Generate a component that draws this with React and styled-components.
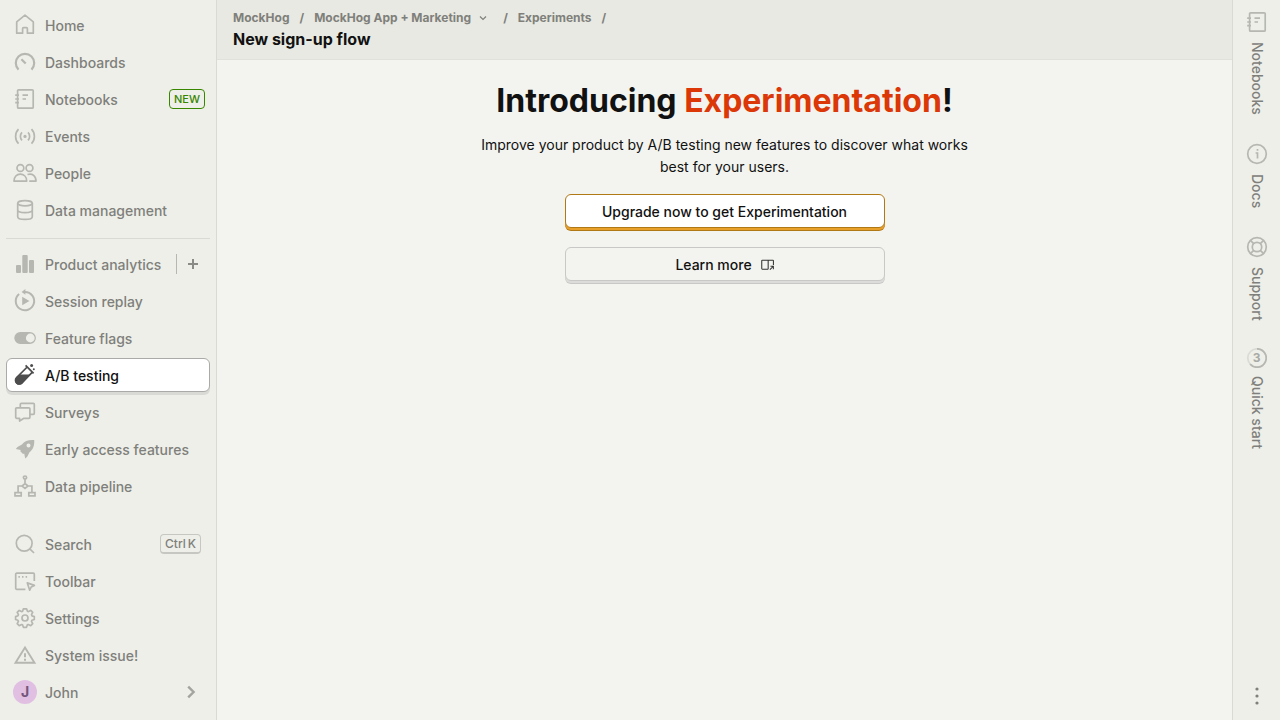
import React from "react";
import styled, { createGlobalStyle } from "styled-components";

const GlobalStyle = createGlobalStyle`
  *, *::before, *::after { box-sizing: border-box; }
  body {
    margin: 0;
    background: #f3f4ef;
    color: #111;
    font-family: Inter, "Liberation Sans", sans-serif;
    font-size: 14px;
    line-height: 20px;
  }
  button { font: inherit; color: inherit; cursor: pointer; }
  a { color: inherit; text-decoration: none; }
`;

const Layout = styled.div`
  display: flex;
  min-height: 100vh;
`;

const Sidebar = styled.nav`
  display: flex;
  flex-direction: column;
  justify-content: space-between;
  flex: 0 0 217px;
  padding: 8px 6px;
  background: #eeefe9;
  border-right: 1px solid #d9dad4;
`;

const NavList = styled.ul`
  list-style: none;
  margin: 0;
  padding: 0;

  & + & {
    margin-top: 8px;
    padding-top: 8px;
    border-top: 1px solid #d9dad4;
  }
`;

const NavItem = styled.li`
  display: flex;
  align-items: flex-start;
  height: 37px;
`;

const NavLink = styled.a`
  display: flex;
  flex: 1;
  align-items: center;
  gap: 8px;
  height: 34px;
  padding: 0 4px 0 6px;
  border: 1px solid ${(p) => (p.$active ? "#aaaaa8" : "transparent")};
  border-radius: 6px;
  background: ${(p) => (p.$active ? "#fff" : "transparent")};
  box-shadow: ${(p) => (p.$active ? "0 3px 0 #d9d9d6" : "none")};
  color: ${(p) => (p.$active ? "#111" : "#7f807b")};
  font-weight: 500;
  white-space: nowrap;
`;

const NavLabel = styled.span`
  flex: 1;
  padding-top: 1px;
`;

const Svg = styled.svg`
  display: block;
  flex: none;
  width: ${(p) => p.$size || 24}px;
  height: ${(p) => p.$size || 24}px;
  color: ${(p) => p.$color || "#b6b7b1"};
  fill: none;
  stroke: currentColor;
  stroke-width: 1.7;
`;

const NewTag = styled.span`
  padding: 0 4px;
  border: 1px solid #388600;
  border-radius: 4px;
  color: #388600;
  font-size: 11px;
  line-height: 18px;
`;

const Kbd = styled.kbd`
  display: flex;
  gap: 2px;
  margin-right: 4px;
  padding: 0 4px;
  border: 1px solid #c6c7c2;
  border-bottom-width: 2px;
  border-radius: 4px;
  font-family: inherit;
  font-size: 12px;
  line-height: 17px;
`;

const AddButton = styled.button`
  display: flex;
  align-items: center;
  justify-content: center;
  width: 34px;
  height: 20px;
  margin-top: 7px;
  padding: 0;
  border: 0;
  border-left: 1px solid #b6b7b1;
  background: none;
`;

const Avatar = styled.span`
  display: flex;
  align-items: center;
  justify-content: center;
  width: 24px;
  height: 24px;
  border-radius: 50%;
  background: #e0bfe3;
  color: #74567a;
  font-weight: 700;
`;

const Center = styled.div`
  display: flex;
  flex: 1;
  flex-direction: column;
  min-width: 0;
`;

const Header = styled.header`
  height: 60px;
  padding: 8px 16px;
  background: #e8e9e2;
  border-bottom: 1px solid #e0e1db;
`;

const Crumbs = styled.nav`
  display: flex;
  align-items: center;
  gap: 10px;
  color: #7f807b;
  font-size: 12px;
  font-weight: 700;
  line-height: 20px;
`;

const CrumbButton = styled.button`
  display: flex;
  align-items: center;
  gap: 6px;
  padding: 0 4px 0 0;
  border: 0;
  background: none;
`;

const Title = styled.h1`
  margin: 0;
  font-size: 16px;
  line-height: 22px;
  font-weight: 700;
`;

const Main = styled.main`
  display: flex;
  flex-direction: column;
  align-items: center;
  padding: 20px 16px;
`;

const Headline = styled.h2`
  margin: 0 0 12px;
  font-size: 32px;
  line-height: 42px;
  font-weight: 700;
  text-align: center;
`;

const Accent = styled.span`
  color: #db3707;
`;

const Lead = styled.p`
  max-width: 512px;
  margin: 0 0 16px;
  line-height: 22px;
  text-align: center;
`;

const Actions = styled.div`
  display: flex;
  flex-direction: column;
  gap: 19px;
  width: 100%;
  max-width: 320px;
`;

const ActionButton = styled.button`
  display: flex;
  align-items: center;
  justify-content: center;
  gap: 8px;
  height: 34px;
  padding: 1px 0 0;
  border: 1px solid ${(p) => (p.$primary ? "#b17816" : "#c8c9c6")};
  border-radius: 6px;
  background: ${(p) => (p.$primary ? "#fff" : "#f3f4ef")};
  box-shadow: ${(p) =>
    p.$primary ? "0 2px 0 #e9a02a, 0 3px 0 #b17816" : "0 2px 0 #dcddda, 0 3px 0 #c8c9c6"};
  font-weight: 500;
`;

const SidePanel = styled.aside`
  display: flex;
  flex-direction: column;
  justify-content: space-between;
  align-items: center;
  flex: 0 0 48px;
  padding: 10px 0 12px;
  background: #eeefe9;
  border-left: 1px solid #d9dad4;
`;

const PanelTabs = styled.div`
  display: flex;
  flex-direction: column;
  gap: 27px;
`;

const PanelTab = styled.button`
  display: flex;
  flex-direction: column;
  align-items: center;
  gap: 8px;
  padding: 0;
  border: 0;
  background: none;
  color: #7f807b;
  font-weight: 500;
`;

const PanelLabel = styled.span`
  writing-mode: vertical-rl;
  white-space: nowrap;
`;

const StepCount = styled.span`
  position: relative;
  display: flex;
  align-items: center;
  justify-content: center;
  width: 20px;
  height: 20px;
  color: #a9aaa5;
  font-size: 12px;
  font-weight: 700;

  svg { position: absolute; inset: 0; }
`;

const MoreButton = styled.button`
  padding: 0;
  border: 0;
  background: none;
`;

const shapes = {
  home: <path strokeLinejoin="round" d="M12 2.2 3.7 8.9v11.3h5.900v-4.500a1 1 0 0 1 1-1h2.800a1 1 0 0 1 1 1v4.500h5.900V8.900z" />,
  gauge: (
    <>
      <path strokeWidth="2.2" d="M5.500 19.600a9.200 9.200 0 1 1 13 0" />
      <path strokeWidth="2.2" d="m8.400 9.200 4.300 4.300" />
    </>
  ),
  notebook: (
    <>
      <rect x="4.600" y="2.800" width="15.600" height="18.400" rx="1" />
      <path d="M2.200 8.200H6M2.200 12H6M2.200 15.600H6M9.500 8.200H15M9.500 12H13" />
    </>
  ),
  events: (
    <>
      <circle cx="12" cy="12.400" r="1.600" fill="currentColor" stroke="none" />
      <path d="M5.500 5.200a10.400 10.400 0 0 0 0 14.400M18.500 5.200a10.400 10.400 0 0 1 0 14.400M9 8.400a5.800 5.800 0 0 0 0 8M15 8.400a5.800 5.800 0 0 1 0 8" />
    </>
  ),
  people: (
    <>
      <circle cx="7.400" cy="7" r="3.400" />
      <circle cx="16.500" cy="7" r="3.400" />
      <path strokeLinejoin="round" d="M1 20.100c0-4.300 2.700-7 6.300-7s6.400 2.700 6.400 7zM14.500 13.500c5-1.600 8.500 1.500 8.500 6.600h-6.800" />
    </>
  ),
  database: (
    <>
      <ellipse cx="12" cy="5.300" rx="7.300" ry="2.600" />
      <path d="M4.700 5.300v13.400c0 1.600 3.200 2.700 7.300 2.700s7.300-1.100 7.300-2.700V5.300M4.700 12c0 1.500 3.200 2.600 7.300 2.600s7.300-1.100 7.300-2.600" />
    </>
  ),
  bars: (
    <g fill="currentColor" stroke="none">
      <rect x="3" y="13" width="5" height="8" rx="1" />
      <rect x="9.300" y="3" width="5.400" height="18" rx="1" />
      <rect x="16" y="8" width="5" height="13" rx="1" />
    </g>
  ),
  replay: (
    <>
      <path strokeWidth="2" d="M6.100 5a9.200 9.200 0 1 0 5.900-2.100H10" />
      <path fill="currentColor" stroke="none" d="M8.600 2.900 12.400.1v5.600zM9.200 7.700v8.500l7.200-4.250z" />
    </>
  ),
  toggle: (
    <path
      fill="currentColor"
      stroke="none"
      fillRule="evenodd"
      d="M7.300 6h9.600a6 6 0 0 1 0 12H7.300a6 6 0 0 1 0-12zm10 1.600a4.400 4.400 0 1 0 0 8.800 4.400 4.400 0 0 0 0-8.800z"
    />
  ),
  testTube: (
    <>
      <path d="m12.600 2.400 8 8M14.200 4 3.600 14.600a3.700 3.700 0 0 0 5.300 5.300L19.400 9.200" />
      <path fill="currentColor" stroke="none" d="M6.800 11.500h10.300L9.500 20.500a4.300 4.300 0 0 1-6.300-6z" />
      <circle cx="18.600" cy="2.600" r="1.500" fill="currentColor" stroke="none" />
      <circle cx="20.800" cy="6.300" r="1" fill="currentColor" stroke="none" />
    </>
  ),
  surveys: (
    <path strokeLinejoin="round" d="M7.300 7.700V4.300a1 1 0 0 1 1-1h12a1 1 0 0 1 1 1v9a1 1 0 0 1-1 1h-3.400M3.700 7.800h12.200a1 1 0 0 1 1 1v8.500a1 1 0 0 1-1 1h-5L6.600 21v-2.700H3.700a1 1 0 0 1-1-1V8.800a1 1 0 0 1 1-1z" />
  ),
  rocket: (
    <path
      fill="currentColor"
      stroke="none"
      fillRule="evenodd"
      d="M21.200 3C15.500 2.600 11.500 4 8.900 7.500L4.500 9.900 2.800 12l4.900 1-.4 1.200 2.700 2.700 1.200-.4 1 5 2-1.700 2.300-4.500C20 12.700 21.600 8.700 21.200 3zM15.500 6.600a2 2 0 1 0 0 4 2 2 0 0 0 0-4z"
    />
  ),
  pipeline: (
    <>
      <circle cx="12" cy="3.600" r="1.600" />
      <path d="M12 5.200v4.300M12 9.500l3 2.500-3 2.500L9 12zM9 12H5.100v6.500M15 12h3.900v6.500M2 18.700h6.200v3.200H2zM15.800 18.700H22v3.200h-6.200z" />
    </>
  ),
  search: (
    <>
      <circle cx="11.200" cy="11.200" r="7.900" />
      <path d="m16.800 16.800 4.200 4.200" />
    </>
  ),
  toolbar: (
    <>
      <path strokeLinejoin="round" d="M12.400 20.300H3.700a1 1 0 0 1-1-1V5.200a1 1 0 0 1 1-1h16.600a1 1 0 0 1 1 1V12M14.300 13.900l7.100 2.500-3.200 1.600-1.500 3.200z" />
      <path d="M5.400 7.800h1.500M9 7.800h1.500M12.600 7.800h1.500" />
    </>
  ),
  gear: (
    <>
      <circle cx="12" cy="12" r="3" />
      <path strokeLinejoin="round" d="m10.400 2.800h3.200l.8 2.400 1 .4 2.300-1.200 2 2-1.200 2.300.5 1.200 2.300.7v2.900l-2.400.8-.4 1.100 1.200 2.300-2 2-2.400-1.200-1 .4-.8 2.400h-3.100l-.8-2.400-1-.4-2.400 1.200-2-2 1.200-2.300-.5-1.100-2.300-.8v-2.900l2.400-.8.4-1.100-1.200-2.300 2-2 2.400 1.200 1-.4z" />
    </>
  ),
  warning: (
    <>
      <path strokeWidth="1.900" d="M12 4.500 2.500 19.800h19z" />
      <path strokeWidth="2" d="M12 10.300v4M12 15.700v2" />
    </>
  ),
  chevronRight: <path strokeWidth="2.400" d="m7.200 6.600 5.400 5.400-5.400 5.400" />,
  chevronDown: <path strokeWidth="2.400" d="m6 9 6 6 6-6" />,
  plus: <path strokeWidth="2" d="M11 7v10M6 12h10" />,
  info: (
    <>
      <circle cx="12" cy="12" r="9.300" />
      <path d="M10.600 11H12.500v5.500M12.500 7v1.800" />
    </>
  ),
  support: (
    <>
      <circle cx="12" cy="12" r="9.300" />
      <circle cx="12" cy="12" r="4.700" />
      <path d="m5.400 5.400 3.300 3.300M15.300 15.300l3.300 3.300M18.600 5.400l-3.300 3.300M8.700 15.300l-3.300 3.300" />
    </>
  ),
  openSide: (
    <>
      <path d="M14 19.200H4a1 1 0 0 1-1-1V4.800a1 1 0 0 1 1-1h18a1 1 0 0 1 1 1V12M14 3.800v15.400" strokeWidth="1.800" />
      <path d="M17 20l5-5M18 14.200h4.900v5" strokeWidth="1.800" />
    </>
  ),
  more: (
    <g fill="currentColor" stroke="none">
      <circle cx="12" cy="5" r="1.600" />
      <circle cx="12" cy="12" r="1.600" />
      <circle cx="12" cy="19" r="1.600" />
    </g>
  ),
};

const Icon = ({ name, size, color }) => (
  <Svg viewBox="0 0 24 24" $size={size} $color={color} aria-hidden="true">
    {shapes[name]}
  </Svg>
);

const projectItems = [
  { label: "Home", icon: "home" },
  { label: "Dashboards", icon: "gauge" },
  { label: "Notebooks", icon: "notebook", extra: <NewTag>NEW</NewTag> },
  { label: "Events", icon: "events" },
  { label: "People", icon: "people" },
  { label: "Data management", icon: "database" },
];

const productItems = [
  { label: "Product analytics", icon: "bars", addable: true },
  { label: "Session replay", icon: "replay" },
  { label: "Feature flags", icon: "toggle" },
  { label: "A/B testing", icon: "testTube", active: true },
  { label: "Surveys", icon: "surveys" },
  { label: "Early access features", icon: "rocket" },
  { label: "Data pipeline", icon: "pipeline" },
];

const accountItems = [
  { label: "Search", icon: "search", extra: <Kbd><span>Ctrl</span><span>K</span></Kbd> },
  { label: "Toolbar", icon: "toolbar" },
  { label: "Settings", icon: "gear" },
  { label: "System issue!", icon: "warning" },
  { label: "John", avatar: "J", extra: <Icon name="chevronRight" color="#a3a49f" /> },
];

const NavSection = ({ items }) => (
  <NavList>
    {items.map((item) => (
      <NavItem key={item.label}>
        <NavLink href="#" $active={item.active} aria-current={item.active ? "page" : undefined}>
          {item.avatar ? (
            <Avatar>{item.avatar}</Avatar>
          ) : (
            <Icon name={item.icon} color={item.active ? "#4d4d4d" : undefined} />
          )}
          <NavLabel>{item.label}</NavLabel>
          {item.extra}
        </NavLink>
        {item.addable && (
          <AddButton aria-label="New insight">
            <Icon name="plus" color="#8a8b86" />
          </AddButton>
        )}
      </NavItem>
    ))}
  </NavList>
);

export default function App() {
  return (
    <Layout>
      <GlobalStyle />
      <Sidebar>
        <div>
          <NavSection items={projectItems} />
          <NavSection items={productItems} />
        </div>
        <NavSection items={accountItems} />
      </Sidebar>
      <Center>
        <Header>
          <Crumbs aria-label="Breadcrumb">
            <a href="#">MockHog</a>
            <span>/</span>
            <CrumbButton>
              MockHog App + Marketing
              <Icon name="chevronDown" size={12} color="#7f807b" />
            </CrumbButton>
            <span>/</span>
            <a href="#">Experiments</a>
            <span>/</span>
          </Crumbs>
          <Title>New sign-up flow</Title>
        </Header>
        <Main>
          <Headline>
            Introducing <Accent>Experimentation</Accent>!
          </Headline>
          <Lead>
            Improve your product by A/B testing new features to discover what works best for your
            users.
          </Lead>
          <Actions>
            <ActionButton $primary>Upgrade now to get Experimentation</ActionButton>
            <ActionButton>
              Learn more
              <Icon name="openSide" size={14} color="#333" />
            </ActionButton>
          </Actions>
        </Main>
      </Center>
      <SidePanel>
        <PanelTabs>
          <PanelTab>
            <Icon name="notebook" />
            <PanelLabel>Notebooks</PanelLabel>
          </PanelTab>
          <PanelTab>
            <Icon name="info" />
            <PanelLabel>Docs</PanelLabel>
          </PanelTab>
          <PanelTab>
            <Icon name="support" />
            <PanelLabel>Support</PanelLabel>
          </PanelTab>
          <PanelTab>
            <StepCount>
              <Svg viewBox="0 0 20 20" $size={20} aria-hidden="true">
                <circle cx="10" cy="10" r="9.200" opacity="0.35" />
                <path d="M10 .8a9.200 9.200 0 1 1-6.900 15.300" />
              </Svg>
              3
            </StepCount>
            <PanelLabel>Quick start</PanelLabel>
          </PanelTab>
        </PanelTabs>
        <MoreButton aria-label="More options">
          <Icon name="more" color="#7f807b" />
        </MoreButton>
      </SidePanel>
    </Layout>
  );
}
